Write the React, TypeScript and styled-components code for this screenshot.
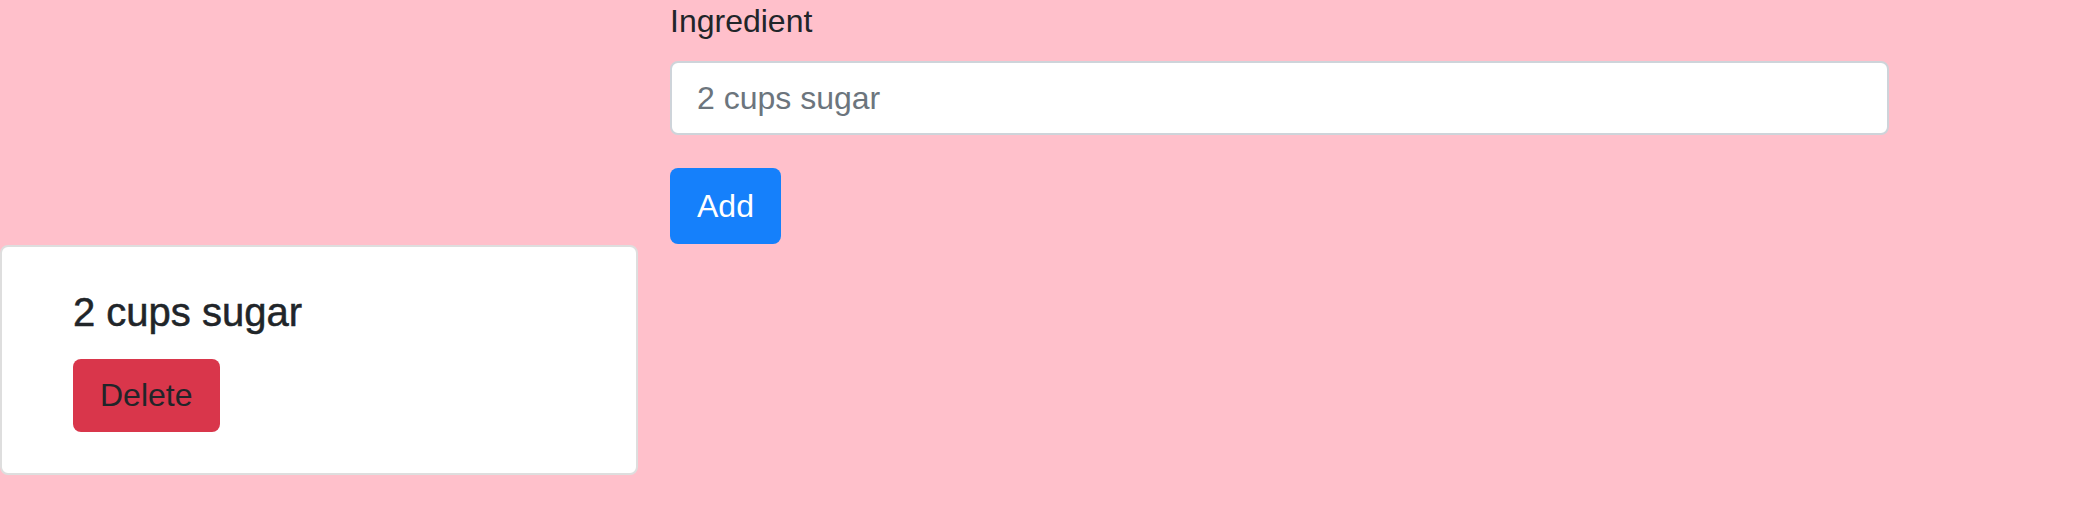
import styled, { createGlobalStyle } from "styled-components";

const GlobalStyle = createGlobalStyle`
  html, body {
    margin: 0;
    padding: 0;
    background: #ffc0cb;
    font-family: "Liberation Sans", Arial, sans-serif;
    color: #212529;
  }
`;

interface Ingredient {
  id: number;
  name: string;
}

const ingredients: Ingredient[] = [{ id: 1, name: "2 cups sugar" }];

export default function App() {
  return (
    <>
      <GlobalStyle />
      <Page>
        <Form onSubmit={(e) => e.preventDefault()}>
          <Label htmlFor="ingredient">Ingredient</Label>
          <Input id="ingredient" type="text" placeholder="2 cups sugar" />
          <Button type="submit" variant="primary">
            Add
          </Button>
        </Form>

        <List>
          {ingredients.map((item) => (
            <Card key={item.id}>
              <CardTitle>{item.name}</CardTitle>
              <Button type="button" variant="danger">
                Delete
              </Button>
            </Card>
          ))}
        </List>
      </Page>
    </>
  );
}

const Page = styled.div`
  min-height: 100vh;
  display: flex;
  flex-direction: column;
`;

const Form = styled.form`
  display: flex;
  flex-direction: column;
  align-items: flex-start;
  width: 1219px;
  margin-left: 670px;
`;

const Label = styled.label`
  font-size: 32px;
  line-height: 38px;
  margin: 2px 0 21px;
`;

const Input = styled.input`
  box-sizing: border-box;
  width: 100%;
  height: 74px;
  padding: 0 25px;
  font-family: inherit;
  font-size: 32px;
  color: #495057;
  background: #fff;
  border: 2px solid #ced4da;
  border-radius: 8px;
  outline: none;

  &::placeholder {
    color: #6c757d;
  }
`;

const Button = styled.button<{ variant: "primary" | "danger" }>`
  box-sizing: border-box;
  height: 76px;
  padding: 0 27px;
  font-family: inherit;
  font-size: 32px;
  border: none;
  border-radius: 8px;
  cursor: pointer;
  background: ${({ variant }) => (variant === "primary" ? "#1580fb" : "#d9364b")};
  color: ${({ variant }) => (variant === "primary" ? "#fff" : "#212529")};
  margin-top: ${({ variant }) => (variant === "primary" ? "33px" : "0")};
`;

const List = styled.div`
  display: flex;
  flex-direction: column;
  margin-top: 1px;
`;

const Card = styled.div`
  box-sizing: border-box;
  width: 638px;
  height: 230px;
  padding: 41px 71px;
  display: flex;
  flex-direction: column;
  align-items: flex-start;
  background: #fff;
  border: 2px solid #dedede;
  border-radius: 8px;
`;

const CardTitle = styled.h5`
  margin: 0 0 23px;
  font-size: 40px;
  font-weight: 500;
  line-height: 48px;
  -webkit-text-stroke: 0.5px #212529;
`;
